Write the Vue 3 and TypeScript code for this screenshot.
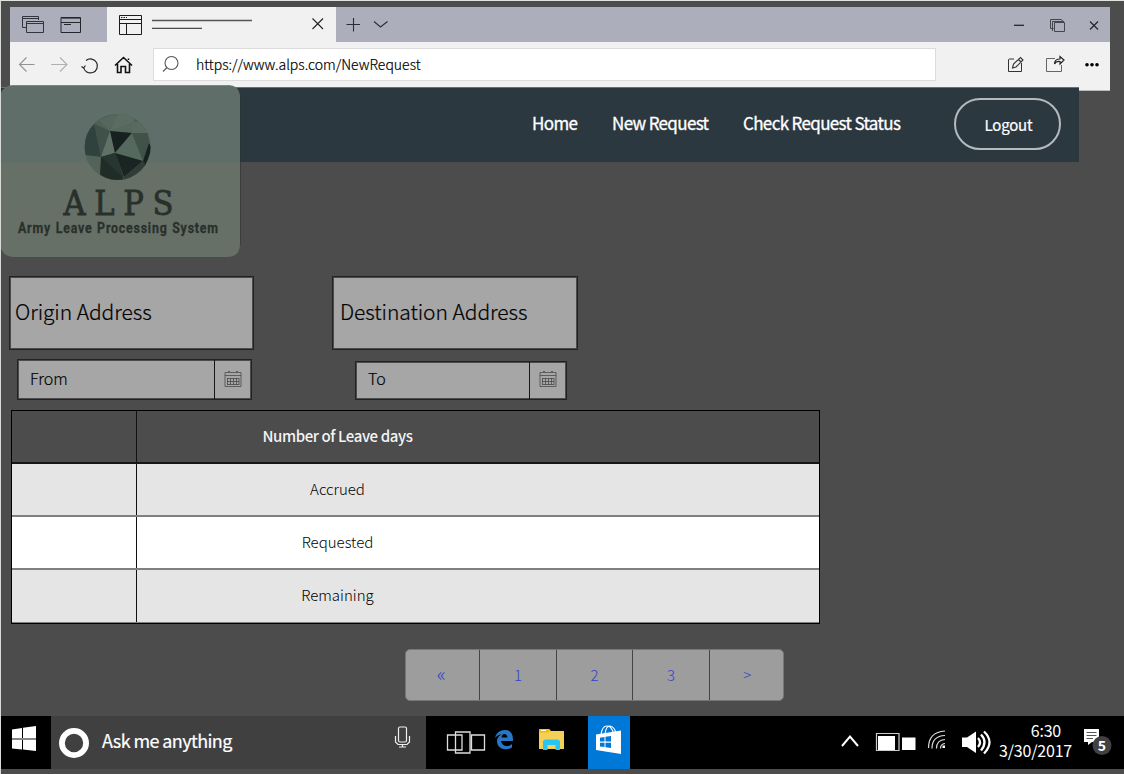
<script setup lang="ts">
interface NavLink { label: string; cls: string }
const links: NavLink[] = [
  { label: 'Home', cls: 'home' },
  { label: 'New Request', cls: 'new' },
  { label: 'Check Request Status', cls: 'status' },
]
const rows: string[] = ['Accrued', 'Requested', 'Remaining']
const pages: string[] = ['«', '1', '2', '3', '>']
</script>

<template>
  <div class="desktop">
    <header class="browser">
      <div class="tabs">
        <div class="tab-tools">
          <svg width="97" height="35" fill="none" stroke="#33343c" stroke-width="1">
            <path d="M17 20.5H12.5V9.500H28.500V13M12.500 11.500H28.500" />
            <path d="M16.500 14.500H33.500V25.500H16.500ZM16.500 16.500H33.500" />
            <path d="M51 10.500H70.500V25.500H51ZM51 15.500H70.500M54 17.500H61" stroke="#25262b" />
            <path d="M51 11.500H70" stroke="#5a5b63" />
          </svg>
        </div>
        <div class="tab">
          <svg width="229" height="35" fill="none" stroke="#1c1c1c">
            <path d="M12.500 8.500H34.500V27.500H12.500ZM12.500 12.500H34.500M12.500 16.500H34.500M19.500 16.500V27.500" />
            <path d="M14 10.500H20" stroke-dasharray="1.500 1" />
            <path d="M45 13.500H145" stroke="#555" stroke-width="1.400" />
            <path d="M45 21.300H95" stroke="#222" />
            <path d="M205.500 11.500L216 22M216 11.500L205.500 22" stroke="#222" stroke-width="1.100" />
          </svg>
        </div>
        <svg class="new-tab" width="60" height="35" fill="none" stroke="#2c2d33" stroke-width="1.100">
          <path d="M10.500 17.500H24M17.500 11V24.500M38 14.500L44.500 20L51.500 14.500" />
        </svg>
        <svg class="window-tools" width="110" height="35" fill="none" stroke="#25262b">
          <path d="M14 18.300H24" stroke-width="1.300" />
          <path d="M53.500 21.500H50.500V12.500H61.500L63 14.500M52.500 24V14.500H64" stroke="#44454d" />
          <path d="M54.500 15.500H64.500V24.500H54.500Z" stroke="#44454d" />
          <path d="M90 14.500L98 22.500M98 14.500L90 22.500" stroke-width="1.200" />
        </svg>
      </div>
      <div class="toolbar">
        <svg class="nav-icons" width="143" height="46" fill="none" stroke-width="1.100">
          <path d="M24.500 22.500H9.500M16.500 15.500L9.500 22.500L16.500 29.500" stroke="#929292" />
          <path d="M41 22.500H57M50 15.500L57 22.500L50 29.500" stroke="#b0b0b0" />
          <path d="M73.500 25A7 7 0 1 0 76 18.500M71.500 24.500L73.500 26L75.500 23.500" stroke="#222" stroke-width="1.200" />
          <path d="M105 23.500L113.500 15.500L122 23.500M107.500 22V30.500H111V24.500H115.500V30.500H119.500V22M118.500 18V16.500" stroke="#111" stroke-width="1.600" />
        </svg>
        <div class="address">
          <svg width="37" height="32" fill="none" stroke="#555" stroke-width="1.100">
            <circle cx="17.500" cy="14" r="6.500" /><path d="M13 18.500L9 22.500" />
          </svg>
          <span class="url">https://www.alps.com/NewRequest</span>
        </div>
        <svg class="action-icons" width="116" height="46" fill="none" stroke="#333">
          <path d="M20 17H15.500Q14.500 17 14.500 18V29.500H27.500V21" />
          <path d="M18.500 26L19.500 22L26.500 15.500L29 18L22 25ZM24.500 17.500L27 20" stroke-width="1.100" />
          <path d="M61 16.500H52.500V29.500H67.500V23" stroke="#666" />
          <path d="M60.500 22Q60.500 17 66 17V14.500L70 18L66 22V19.500Q62 19 60.500 22Z" stroke="#222" stroke-width="1.200" />
          <g fill="#000" stroke="none"><circle cx="93" cy="22.800" r="1.800" /><circle cx="98" cy="22.800" r="1.800" /><circle cx="103" cy="22.800" r="1.800" /></g>
        </svg>
      </div>
    </header>

    <nav class="site-nav">
      <a v-for="l in links" :key="l.label" :class="l.cls">{{ l.label }}</a>
      <button class="logout">Logout</button>
    </nav>

    <svg class="logo" width="242" height="172" viewBox="0 0 242 172">
      <defs>
        <clipPath id="globe"><circle cx="117.600" cy="62" r="33" /></clipPath>
      </defs>
      <path d="M240 12V160" stroke="#26302f" />
      <path d="M0 12Q2 0 14 0H227Q240 0 240 13V159Q240 172 227 172H14Q2 172 0 159Z" fill="#667067" />
      <path d="M0 12Q1 2 13 1H227Q239 1 240 13V77.500H0Z" fill="#5f6e68" />
      <path d="M12 .5H228" stroke="#7b8b79" />
      <g clip-path="url(#globe)">
        <rect x="84" y="28" width="68" height="68" fill="#4b5d54" />
        <path d="M84 28H118L110 46L96 39Z" fill="#506158" />
        <path d="M118 28H134V43L110 46Z" fill="#5b6c63" />
        <path d="M99 35L118 28L110 46Z" fill="#56675e" />
        <path d="M133 37L152 36V48H131Z" fill="#596b61" />
        <path d="M110 46L133 37L131 48Z" fill="#56685f" />
        <path d="M94 39L110 46L101 72Z" fill="#40514a" />
        <path d="M94 39L84 48V70L101 72Z" fill="#30423d" />
        <path d="M110 46L115 68L101 72Z" fill="#607168" />
        <path d="M110 46L132 48L115 68Z" fill="#17211f" />
        <path d="M132 48L115 68L143 76Z" fill="#56695f" />
        <path d="M132 48H148L149 60L143 76Z" fill="#40524a" />
        <path d="M149 58L152 64L144 84L143 76Z" fill="#17211f" />
        <path d="M84 70L101 72V91L84 84Z" fill="#53635a" />
        <path d="M101 72L115 68L124 96H100V90Z" fill="#202c28" />
        <path d="M115 68L143 76L124 92Z" fill="#1a2422" />
        <path d="M115 68L101 72L124 93Z" fill="#273631" />
        <path d="M143 76L148 82L124 98V92Z" fill="#303c37" />
      </g>
      <text class="logo-name" x="63.500" y="129.500" textLength="110">ALPS</text>
      <text class="logo-sub" x="22.500" y="148" textLength="250" transform="scale(.8 1)">Army Leave Processing System</text>
    </svg>

    <main>
      <section class="fields">
        <div class="origin">
          <div class="box origin-box">Origin Address</div>
          <div class="date from"><span>From</span><i>
            <svg width="18" height="18" fill="none" stroke="#444"><path d="M1 2.500H17V16.500H1ZM1 5.500H17M4 1.500H6M12 1.500H14M3 8.500H15M3 11.500H15M3 14.500H15M3.500 8V15M6.500 8V15M9.500 8V15M12.500 8V15M15 8V15" stroke-width=".75" /></svg></i>
          </div>
        </div>
        <div class="destination">
          <div class="box dest-box">Destination Address</div>
          <div class="date to"><span>To</span><i>
            <svg width="18" height="18" fill="none" stroke="#444"><path d="M1 2.500H17V16.500H1ZM1 5.500H17M4 1.500H6M12 1.500H14M3 8.500H15M3 11.500H15M3 14.500H15M3.500 8V15M6.500 8V15M9.500 8V15M12.500 8V15M15 8V15" stroke-width=".75" /></svg></i>
          </div>
        </div>
      </section>
      <section class="table">
        <div class="row head"><div></div><div class="label">Number of Leave days</div></div>
        <div v-for="r in rows" :key="r" class="row"><div></div><div class="label">{{ r }}</div></div>
      </section>
      <div class="pages"><a v-for="p in pages" :key="p">{{ p }}</a></div>
    </main>

    <footer class="taskbar">
      <div class="start">
        <svg width="50" height="53"><path d="M11 13.500L21 12V22H11ZM22 11.800L35 10V22H22ZM11 24H21V33.500L11 32.500ZM22 24H35V35L22 33.500Z" fill="#fff" /><path d="M11 23H35" stroke="#888" stroke-width="2" /></svg>
      </div>
      <div class="search">
        <svg width="46" height="53"><circle cx="23" cy="27" r="12.100" fill="none" stroke="#fff" stroke-width="5.800" /></svg>
        <span>Ask me anything</span>
        <svg class="mic" width="20" height="53" fill="none" stroke="#eee" stroke-width="1.200"><rect x="6.500" y="11" width="8" height="15" rx="1.500" /><path d="M3.500 20V26L6 28.500H15L17.500 26V20M10.500 28.500V31M7 31H14" /></svg>
      </div>
      <div class="apps">
        <svg width="162" height="53">
          <g fill="none" stroke="#ddd" stroke-width="1.300"><path d="M21.500 19H36V34H21.500ZM29.500 16H44V37H29.500ZM45.500 19H58.500V34H45.500Z" /></g>
          <path d="M69 22Q71 14 79 14Q87.500 14 87 25H75Q76 30 81 30Q84 30 86 28V31.500Q82 34 77 33Q70.500 31 71 24Q72 20 76 18Q71 19 69 22ZM75.500 21.500H81.500Q81 18 78.500 18Q76 18 75.500 21.500Z" fill="#2877c6" fill-rule="evenodd" />
          <path d="M113 14Q113 13 114 13H123L125 15H138V33H113Z" fill="#f5d057" />
          <path d="M113 13.500H124L123 16.500H113Z" fill="#f8b900" /><path d="M115 14.500H120" stroke="#fff" />
          <path d="M117 34V25L119 23.500H132L134 25V34H129.500V29H121.500V34Z" fill="#27c6f2" />
        </svg>
        <div class="store">
          <svg width="42" height="53" fill="none" stroke="#fff"><path d="M13 19Q14 10 19 10Q24 10 26 19M17 18Q18 10 22 10Q27 11 28 18" stroke-width="1.200" /><path d="M8 18.500L33 14.500V38L8 34Z" fill="#fff" stroke="none" /><path d="M12 21.800L16.500 21V25.500H12ZM17.500 20.800L23 20V25.500H17.500ZM12 26.700H16.500V31L12 30.400ZM17.500 26.700H23V32L17.500 31.200Z" fill="#0078d7" stroke="none" /></svg>
        </div>
      </div>
      <div class="tray">
        <svg width="164" height="53" fill="none" stroke="#fff">
          <path d="M13 30L21 20.500L29 30" stroke-width="2" />
          <path d="M47.500 17.500H70V34.500H47.500Z" stroke="#ccc" stroke-width="1.200" /><path d="M49 20H66V34H49ZM73 21.500H86.500V34H73Z" fill="#fff" stroke="none" />
          <g stroke="#ddd" stroke-width="1.200"><path d="M99.500 32Q99.500 16 116 15M103 32.500Q103 20 116 19.500M107.500 32.500Q107.500 24 116 23.500M111.500 32.500Q111.500 28 116 27.500" /></g><rect x="113.500" y="29.500" width="2.500" height="2.500" fill="#fff" stroke="none" />
          <path d="M133 21.500H138L147 15.500V37L138 31H133Z" fill="#fff" stroke="none" />
          <path d="M149 22Q153 26.500 149 31M152 18.500Q159 26 152 34.500M155 15.500Q166 26 155 37.500" stroke-width="2.300" />
        </svg>
        <div class="clock"><span>6:30</span><span>3/30/2017</span></div>
        <svg class="notice" width="36" height="53">
          <path d="M8 13H23V26H16L12 29V26H8Z" fill="#fff" /><path d="M10.500 16.500H20.500M10.500 19.500H20.500M10.500 22.500H17" stroke="#555" />
          <circle cx="26" cy="29.500" r="9.500" fill="#414141" /><text x="26" y="34.500" text-anchor="middle">5</text>
        </svg>
      </div>
    </footer>
  </div>
</template>

<style>
body { margin: 0; background: #4c4c4c; overflow: hidden; }
</style>
<style scoped>
.desktop { position: relative; box-sizing: border-box; width: 1124px; height: 774px; background: #4c4c4c; border-top: 1px solid #dfe4df; border-left: 1px solid #d8dbd8; overflow: hidden; font-family: "Noto Sans CJK SC", "Noto Sans", sans-serif; }
svg { display: block; flex: none; }
.browser { margin: 6px 0 0 9px; width: 1100px; height: 84px; box-sizing: border-box; background: #f1f1f1; border-bottom: 1px solid #bbb; }
.tabs { display: flex; height: 35px; background: #acafbb; }
.tab-tools { width: 97px; }
.tab { width: 229px; background: #f1f1f1; }
.window-tools { margin-left: auto; }
.toolbar { display: flex; height: 46px; }
.address { box-sizing: border-box; width: 783px; height: 33px; margin-top: 6px; border: 1px solid #dcdcdc; background: #fff; display: flex; }
.url { margin-left: 5px; font-size: 14px; font-weight: 300; -webkit-text-stroke: .2px; line-height: 31px; color: #000; }
.action-icons { margin-left: 58px; }
.site-nav { position: relative; box-sizing: border-box; margin: -4px 0 0 -1px; width: 1079px; height: 75px; background: #2c3840; border-top: 1px solid #657078; padding-left: 532px; display: flex; color: #fff; }
.site-nav a { font-size: 17px; line-height: 69px; font-weight: 400; letter-spacing: -.65px; -webkit-text-stroke: .3px; white-space: nowrap; }
.home { width: 80px; }
.new { width: 131px; }
.status { width: 211px; }
.logout { box-sizing: border-box; width: 107px; height: 52px; margin-top: 10px; padding: 1px 0 0 2px; border: 2px solid #b4babd; border-radius: 26px; background: none; color: #fff; font: 400 15px "Noto Sans CJK SC", sans-serif; letter-spacing: -.2px; -webkit-text-stroke: .2px; }
.logo { position: absolute; left: -1px; top: 84px; }
.logo-name { font: 34px "DejaVu Serif Condensed", "DejaVu Serif", serif; font-stretch: condensed; fill: #29302c; stroke: #29302c; stroke-width: .8px; }
.logo-sub { font: bold 15.500px Roboto, sans-serif; word-spacing: 1px; fill: #29302c; stroke: #29302c; stroke-width: .3px; }
main { height: 554px; box-sizing: border-box; padding: 114px 0 0 8px; }
.fields { display: flex; }
.origin { width: 323px; }
.box { box-sizing: border-box; height: 74px; border: 1px solid #222; box-shadow: inset 0 0 0 1px rgba(0,0,0,.55); background: #a6a6a6; font-size: 21px; font-weight: 300; letter-spacing: -.06px; -webkit-text-stroke: .2px; line-height: 69px; color: #000; }
.origin-box { width: 245px; padding-left: 5px; }
.dest-box { width: 246px; padding-left: 7px; }
.date { box-sizing: border-box; display: flex; border: 1px solid #222; box-shadow: inset 0 0 0 1px rgba(0,0,0,.55); background: #a6a6a6; font-size: 16px; font-weight: 300; color: #000; }
.date span { flex: 1; padding-left: 12px; line-height: 37px; -webkit-text-stroke: .15px; }
.date i { width: 36px; border-left: 1px solid #161616; display: flex; align-items: center; justify-content: center; padding-bottom: 2px; }
.from { width: 235px; height: 41px; margin: 9px 0 0 8px; }
.to { width: 212px; height: 39px; margin: 11px 0 0 23px; }
.to span { line-height: 33px; }
.to i { padding-bottom: 4px; }
.table { box-sizing: border-box; width: 809px; height: 214px; margin: 10px 0 0 2px; border: 1px solid #000; display: grid; grid-template-rows: 53px 53px 53px 53px; font-size: 15px; font-weight: 300; color: #000; }
.row { display: grid; grid-template-columns: 125px 1fr; background: #e5e5e5; box-sizing: border-box; border-bottom: 2px solid #808080; }
.row:last-child { border-bottom-width: 1px; }
.row:nth-child(3) { background: #fff; }
.row.head { background: #4c4c4c; color: #f4f4f4; font-weight: 500; border-bottom: 2px solid #161616; letter-spacing: -.4px; }
.row > div:first-child { border-right: 1px solid #111; }
.label { padding-right: 281px; text-align: center; line-height: 50px; }
.pages { display: flex; width: 379px; height: 52px; margin: 25px 0 0 396px; border-radius: 5px; overflow: hidden; background: #9d9d9d; box-sizing: border-box; border: 1px solid #777; }
.pages a { box-sizing: border-box; width: 76.700px; border-right: 1px solid #444; text-align: center; line-height: 49px; font-size: 15px; font-weight: 300; color: #3244c4; }
.pages a:first-child { width: 74.500px; font-size: 20px; line-height: 47px; padding-right: 3px; }
.pages a:last-child { border: 0; width: 73.500px; padding-left: 2px; }
.taskbar { display: flex; height: 53px; background: #000; color: #fff; }
.start { width: 50px; }
.search { display: flex; width: 375px; background: #404040; box-sizing: border-box; }
.search span { font-size: 18px; letter-spacing: -.6px; line-height: 49px; margin-left: 5px; -webkit-text-stroke: .2px; }
.mic { margin-left: auto; margin-right: 14px; }
.apps { display: flex; }
.store { width: 42px; background: #0078d7; }
.tray { display: flex; margin-left: auto; }
.clock { width: 80px; display: flex; flex-direction: column; text-align: right; font-size: 16px; letter-spacing: -.2px; line-height: 20px; padding-top: 4px; box-sizing: border-box; }
.clock span { padding-right: 1px; }
.clock span:first-child { padding-right: 12px; }
.notice { margin-right: 12px; margin-left: 3px; }
.notice text { font: bold 14px "Noto Sans CJK SC", sans-serif; fill: #fff; }
</style>
